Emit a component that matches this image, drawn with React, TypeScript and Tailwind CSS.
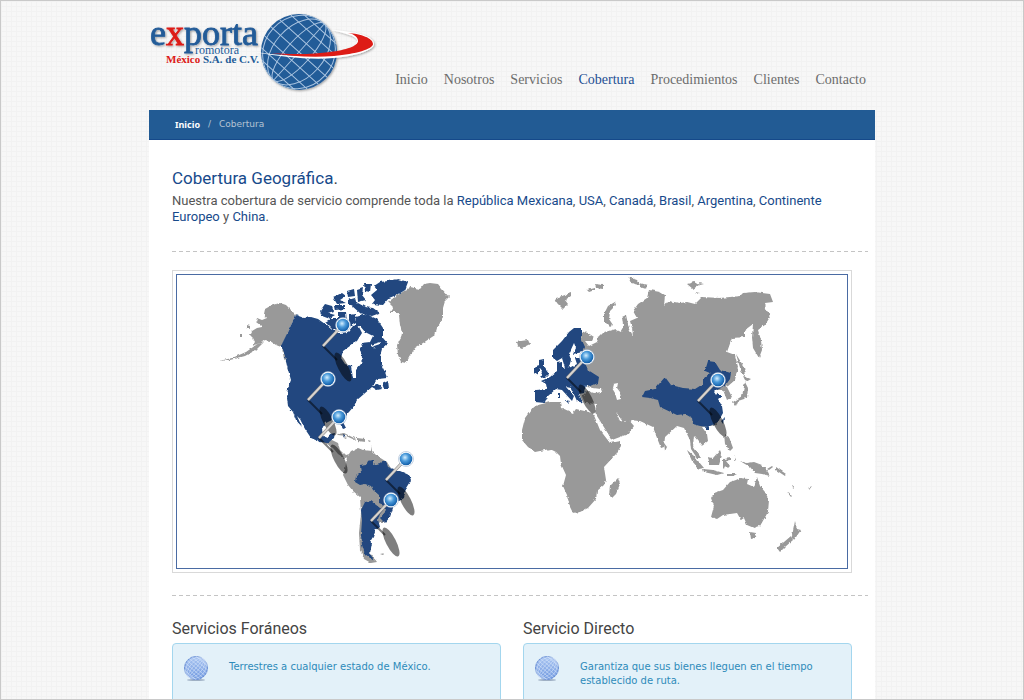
const navItems = [
  "Inicio",
  "Nosotros",
  "Servicios",
  "Cobertura",
  "Procedimientos",
  "Clientes",
  "Contacto",
];

const places = [
  "República Mexicana",
  "USA",
  "Canadá",
  "Brasil",
  "Argentina",
];

const services = [
  {
    title: "Servicios Foráneos",
    text: "Terrestres a cualquier estado de México.",
  },
  {
    title: "Servicio Directo",
    text: "Garantiza que sus bienes lleguen en el tiempo establecido de ruta.",
  },
];

// x, y of the tip of every pin on the map
const pins = [
  [323, 346],
  [308, 400],
  [319, 438],
  [386, 480],
  [371, 521],
  [567, 378],
  [698, 401],
];

const greyLand = [
  // Alaska
  "M296 315L290 309 286 305 280 303 272 305 265 309 264 314 267 318 262 320 257 318 256 322 260 325 262 327 257 328 252 331 250 335 253 338 255 342 252 346 261 343 265 340 270 341 276 345 281 347Z",
  "M264 342L256 350 245 356 230 360 219 361 232 358 246 352 256 345Z",
  "M247 325l3 1 0 3-3-1ZM240 334l2 0 0 2-2 0ZM282 348l5 3 0 12-3-4Z",
  // Greenland
  "M388 302L395 297 404 291 410 287 420 289 424 284 430 283 438 284 442 289 449 297 445 301 443 308 443 318 437 328 435 335 423 343 415 348 410 356 406 363 401 362 398 355 397 345 401 338 402 333 400 325 399 315 397 312 390 312 393 307Z",
  // Central America and the Caribbean
  "M326 442L332 440 338 443 340 450 345 455 350 454 349 457 344 458 338 454 333 448 326 444Z",
  "M337 434l7-1 8 4 4 2-1 1-9-4-8-1ZM357 438l8 1 0 3-8-1ZM344 437l3 1-2 1ZM368 440l3 1-2 1ZM371 446l1 5-1 0Z",
  // South America
  "M347 457L351 451 358 448 363 450 372 451 376 455 382 459 387 462 392 470 392 505 386 510 388 516 386 522 380 522 376 527 371 540 370 553 377 562 371 563 364 559 360 550 359 533 361 513 360 497 353 491 348 485 343 475 345 469Z",
  "M380 554l5-1-2 2ZM413 558l1 0 0 1Z",
  // Iceland and the arctic islands
  "M517 342L521 341 528 340 530 344 522 348 518 346Z",
  "M555 298L562 296 571 293 571 296 565 300 568 304 563 309 557 303Z",
  "M587 290l8-2 0 2-6 2ZM595 284l8 1 0 4-7-1ZM628 277l9 3 3 5-9-2ZM640 283l7 2-1 4-6-2Z",
  "M615 302L608 306 604 314 604 321 610 327 613 325 609 319 610 311 616 305Z",
  "M687 284l7-2 5 3-6 4ZM699 283l5 1-4 1ZM695 292l5 1-4 1Z",
  // Africa and Madagascar
  "M533 407L538 405 550 402 561 402 562 408 573 413 576 409 593 413 600 430 610 443 621 441 621 446 616 454 604 467 606 480 604 485 597 491 596 499 588 508 580 512 573 513 570 507 567 495 563 486 566 475 561 464 560 456 556 452 550 449 535 452 528 447 522 440 522 430 525 418Z",
  "M618 478L620 484 616 494 612 498 609 495 610 486Z",
  // Asia
  "M580 331L588 333 594 337 592 341 585 341 589 346 597 342 598 337 602 333 615 329 621 332 623 325 622 317 626 315 629 328 633 336 632 328 630 321 637 318 633 311 638 304 647 298 649 290 660 292 665 295 664 306 668 301 680 303 687 302 695 304 702 297 720 298 740 296 743 293 755 292 770 294 773 302 765 303 766 308 770 317 765 325 758 330 761 340 762 350 759 358 753 348 752 337 753 324 745 330 745 337 732 338 727 352 735 355 738 367 735 380 727 387 732 397 727 400 723 390 716 390 717 425 702 427 707 434 708 441 702 446 694 436 693 446 701 458 697 458 691 449 690 440 684 428 677 426 665 437 664 447 661 448 657 438 653 427 640 421 628 420 623 422 616 412 620 421 625 422 628 419 634 426 628 434 612 440 597 416 595 412 597 404 585 403 582 396 588 390 586 372 580 360 584 352Z",
  "M664 443l3 4-2 4ZM736 354L744 367 745 377 741 371ZM743 376L751 379 746 382ZM745 382L748 388 747 398 738 401 736 406 733 402 742 396Z",
  // South-east Asia and Oceania
  "M687 450L694 456 704 468 699 469 692 461ZM703 469L713 470 724 473 717 475 704 472Z",
  "M708 457L713 458 720 450 722 455 719 465 710 465ZM723 459l8-1 0 2-5 1 4 5-2 2-3-3-1 4-1-1ZM724 434l5 3 4 11-3 3-5-7ZM727 474l10 0-4 2-6 0ZM734 455l2 5-2 1Z",
  "M740 461L747 463 754 462 762 465 768 472 770 476 762 474 755 473 750 467ZM767 469l5-3 1 1-4 3ZM776 467l10 7-1 2-9-6ZM787 492l5 4-1 1ZM808 488l4-2-3 4ZM792 483l2 5-1 1Z",
  "M711 517L714 506 711 498 714 493 723 490 730 482 736 480 740 478 748 479 747 484 754 487 757 477 760 486 765 492 769 500 768 512 760 526 754 528 747 525 744 518 741 520 737 513 723 515 717 519Z",
  "M750 532l6 1-1 5-4 1ZM795 521L797 529 801 530 794 540 792 536ZM791 536L793 540 785 547 780 552 777 548Z",
];

const blueLand = [
  // Canada, USA and Mexico
  "M296 315L304 318 311 317 318 319 325 324 331 329 340 333 348 332 353 326 358 325 362 333 357 341 350 346 343 351 341 358 345 364 351 366 353 378 356 378 356 370 361 364 362 357 360 350 363 345 368 349 372 350 376 354 381 356 381 364 385 372 387 378 378 379 372 385 378 384 382 389 377 390 372 387 364 394 357 400 354 406 349 412 344 417 343 422 346 428 343 429 339 422 331 420 325 423 322 429 323 436 328 438 330 434 335 433 334 438 328 443 320 442 311 438 305 429 300 419 297 416 302 427 296 420 293 412 288 406 287 398 288 388 291 380 287 366 284 352 281 346Z",
  "M382 383L388 380 389 389 384 389Z",
  // Canadian arctic
  "M408 282L398 279 388 281 380 282 374 286 377 290 371 295 375 300 372 304 383 305 389 298 399 294 405 290Z",
  "M356 317L366 314 377 319 383 328 383 338 388 344 382 349 380 356 373 353 366 348 361 343 370 342 373 336 365 332 360 326 356 327Z",
  "M320 311L325 304 332 306 334 311 328 313 335 315 330 318 338 318 338 312 346 312 347 322 342 329 332 329 325 322 330 319 322 316Z",
  "M352 306L358 303 365 307 373 308 380 313 372 316 360 313ZM349 315l6-1 1 9-7 4ZM333 297L342 293 346 296 340 300 346 303 337 304ZM347 291L354 289 355 296 348 297ZM357 290L363 288 362 295 366 300 358 302ZM348 300L355 298 357 305 348 305ZM364 284L371 284 370 292 365 291ZM334 305l11 0 0 4-10 1Z",
  // Cuba
  "M343 434l3 1-2 2Z",
  // Brazil and Argentina
  "M355 482L356 476 361 473 360 466 366 465 368 461 373 460 373 465 380 463 386 461 388 467 400 471 409 475 411 480 406 488 404 498 396 503 393 508 390 517 385 523 380 518 386 511 384 505 379 503 379 495 373 490 371 486 365 484 360 485Z",
  "M365 502L371 501 380 508 385 508 380 514 378 520 380 527 375 531 373 537 371 540 372 543 370 553 374 561 365 554 362 545 361 535 362 520 361 510Z",
  // Scandinavia
  "M581 328L574 328 569 332 562 341 553 350 553 358 557 361 562 358 565 368 569 367 571 360 569 354 574 343 576 348 573 354 583 352 585 347 581 338Z",
  // British Isles
  "M539 360L544 359 544 367 549 374 546 377 540 378 542 372 539 368ZM534 368L539 366 539 373 534 375Z",
  // Continental Europe
  "M535 390L547 389 546 384 541 381 550 377 557 371 557 363 562 362 562 368 572 367 577 364 575 358 583 358 588 370 599 377 598 383 591 386 586 385 584 393 579 394 583 403 577 401 571 388 566 387 574 396 572 401 562 390 556 389 548 396 545 403 535 402Z",
  "M558 393l2 0 0 5-2 0ZM565 400l5 1-2 2Z",
  // China
  "M642 397L645 391 655 389 659 384 665 377 671 385 683 388 695 389 703 384 703 379 710 373 705 371 708 361 715 362 720 370 731 373 730 379 725 386 715 391 722 396 718 399 722 406 723 413 718 422 708 427 700 426 693 424 692 418 685 414 677 415 660 407 658 400 650 398Z",
  "M724 418l-1 6-2-3ZM706 427l3 0 0 3-3 0Z",
];

// Black Sea, Caspian Sea and the smaller inlets
const water = [
  "M588 391L587 387 593 388 601 389 602 392 594 393Z",
  "M613 384L618 383 617 388 620 392 621 399 617 400 615 393 612 388Z",
  "M381 342l-7 2 0 2 6-2ZM376 349l-5-5 0 2ZM715 389l4 2-3 4-2-3Z",
];

function Logo() {
  return (
    <svg
      className="h-[100px] w-[232px] shrink-0"
      viewBox="148 1 232 100"
      role="img"
      aria-label="Exporta Promotora México"
    >
      <defs>
        <clipPath id="logo-globe">
          <circle cx="299" cy="52" r="38" />
        </clipPath>
        <filter id="logo-shadow" x="-10%" y="-10%" width="125%" height="125%">
          <feDropShadow dx="1" dy="1" stdDeviation="1" floodOpacity="0.35" />
        </filter>
      </defs>
      <g filter="url(#logo-shadow)">
        <circle cx="299" cy="52" r="38" fill="#225b98" />
        <g
          clipPath="url(#logo-globe)"
          fill="none"
          stroke="#a9c4e0"
          strokeWidth="1"
        >
          <g transform="rotate(42 299 52)">
            <ellipse cx="299" cy="52" rx="12" ry="38" />
            <ellipse cx="299" cy="52" rx="25" ry="38" />
            <ellipse cx="299" cy="52" rx="35" ry="38" />
            <path d="M299 14V90M261 52H337M263 41H335M263 63H335M268 30H330M268 74H330M276 21H322M276 83H322" />
          </g>
        </g>
        <path
          d="M255 52C280 56 306 57 328 54C346 52 358 46 357 40C356 36 344 33 332 30C338 30 344 31 350 32C364 34 374 38 374 44C374 50 357 56 334 58C312 60 280 57 255 52Z"
          fill="#fff"
        />
        <path
          d="M271 53C296 55 315 54 330 52C346 50 358 46 358 41C358 37 354 34 348 33C361 34 373 38 373 44C373 49 356 54 334 56C312 58 290 56 271 53Z"
          fill="#dd1b17"
        />
      </g>
      <g
        fontFamily="'Liberation Serif', serif"
        fill="#225b98"
        filter="url(#logo-shadow)"
      >
        <text x="150" y="45" fontSize="36" stroke="#225b98" strokeWidth="0.8">
          e
          <tspan fill="#dd1b17" stroke="#dd1b17">
            x
          </tspan>
          porta
        </text>
      </g>
      <g fontFamily="'Liberation Serif', serif" fill="#225b98">
        <text x="195" y="54" fontSize="12">
          romotora
        </text>
        <text x="166" y="63" fontSize="11" fontWeight="700">
          <tspan fill="#dd1b17">México</tspan> S.A. de C.V.
        </text>
      </g>
    </svg>
  );
}

function Pin({ x, y }: { x: number; y: number }) {
  return (
    <g transform={`translate(${x} ${y})`}>
      <path d="M0 0L14 14" stroke="#000" strokeOpacity="0.5" strokeWidth="2" />
      <ellipse
        rx="5"
        ry="16"
        transform="translate(20 21) rotate(-27)"
        fillOpacity="0.5"
      />
      <path d="M0 0L15 -16" stroke="#777" strokeWidth="3" />
      <path d="M0 0L15 -16" stroke="#d8d4d0" strokeWidth="2" />
      <circle cx="20" cy="-21" r="7.5" fill="#fff" />
      <circle cx="20" cy="-21" r="7.5" fill="none" stroke="#8aa5c4" strokeWidth="0.5" />
      <circle cx="20" cy="-21" r="6.3" fill="url(#pin-ball)" />
    </g>
  );
}

function WorldMap() {
  return (
    <svg
      className="block w-full"
      viewBox="177 275 670 293"
      role="img"
      aria-label="Mapa de cobertura"
    >
      <defs>
        <radialGradient id="pin-ball" cx="0.42" cy="0.38" r="0.65">
          <stop offset="0" stopColor="#d5efff" />
          <stop offset="0.45" stopColor="#4a9ada" />
          <stop offset="1" stopColor="#0b58a5" />
        </radialGradient>
        {/* breaks the straight edges up into a coastline */}
        <filter id="coast" x="0" y="0" width="100%" height="100%">
          <feTurbulence
            type="fractalNoise"
            baseFrequency="0.25"
            numOctaves="2"
            seed="4"
          />
          <feDisplacementMap
            in="SourceGraphic"
            scale="3"
            xChannelSelector="R"
            yChannelSelector="G"
          />
        </filter>
      </defs>
      <g filter="url(#coast)">
        <path d={greyLand.join("")} fill="#999" />
        <path d={blueLand.join("")} fill="#20477f" />
        <path d={water.join("")} fill="#fff" />
      </g>
      {pins.map(([x, y]) => (
        <Pin key={`${x}-${y}`} x={x} y={y} />
      ))}
    </svg>
  );
}

function GlobeIcon() {
  return (
    <svg className="size-[26px] shrink-0" viewBox="0 0 26 26" aria-hidden="true">
      <defs>
        <linearGradient id="globe-fill" x1="0" y1="0" x2="0" y2="1">
          <stop offset="0" stopColor="#a9c5f1" />
          <stop offset="1" stopColor="#7099e0" />
        </linearGradient>
        <clipPath id="globe-clip">
          <circle cx="13" cy="12" r="12" />
        </clipPath>
      </defs>
      <ellipse cx="13" cy="24" rx="9" ry="1" fill="#9fb0c4" />
      <circle cx="13" cy="12" r="11.5" fill="url(#globe-fill)" stroke="#6d92d6" />
      <g
        clipPath="url(#globe-clip)"
        fill="none"
        stroke="#dbe8fb"
        strokeWidth="0.5"
        transform="rotate(40 13 12)"
      >
        <ellipse cx="13" cy="12" rx="3" ry="12" />
        <ellipse cx="13" cy="12" rx="6" ry="12" />
        <ellipse cx="13" cy="12" rx="9" ry="12" />
        <path d="M13 0V24M1 12H25M1 9H25M1 15H25M2 6H24M2 18H24M4 3H22M4 21H22" />
      </g>
    </svg>
  );
}

function Divider() {
  return (
    <div className="mr-[7px] ml-[23px] h-px bg-[repeating-linear-gradient(90deg,#c4c4c4_0_4px,transparent_4px_7px)]" />
  );
}

export default function App() {
  return (
    <div className="h-screen overflow-hidden border border-[#c9c9c9] bg-[#f7f7f7] bg-[linear-gradient(#f2f2f2_1px,transparent_1px),linear-gradient(90deg,#f2f2f2_1px,transparent_1px)] bg-[size:5px_5px] font-['Roboto',sans-serif]">
      <div className="mx-auto max-w-[726px]">
        <header className="-ml-px flex h-[109px] items-start justify-between pr-[9px]">
          <Logo />
          <nav className="flex gap-4 pt-[69px] font-['Liberation_Serif',serif] text-[14px] leading-5 text-[#6c6c6c]">
            {navItems.map((item) => (
              <a
                key={item}
                href="#"
                className={item === "Cobertura" ? "text-[#1d4f93]" : undefined}
              >
                {item}
              </a>
            ))}
          </nav>
        </header>

        <div className="flex h-[30px] items-center gap-2 border-b border-[#15498a] bg-[#225b94] px-[26px] font-['DejaVu_Sans',sans-serif] text-[9px]">
          <a
            href="#"
            className="font-['Noto_Sans',sans-serif] font-bold text-white"
          >
            Inicio
          </a>
          <span className="text-[#b5c3d3]">/</span>
          <span className="text-[#b5c3d3]">Cobertura</span>
        </div>

        <main className="bg-white pb-10">
          <div className="h-[111px] px-[23px] pt-[26px]">
            <h1 className="text-[17px] leading-6 text-[#174a8b]">
              Cobertura Geográfica<span className="text-[#444]">.</span>
            </h1>
            <p className="pt-[3px] text-[13px] leading-4 text-[#555]">
              Nuestra cobertura de servicio comprende toda la{" "}
              {places.map((place) => (
                <span key={place}>
                  <span className="text-[#174a8b]">{place}</span>,{" "}
                </span>
              ))}
              <span className="text-[#174a8b]">Continente Europeo</span> y{" "}
              <span className="text-[#174a8b]">China</span>.
            </p>
          </div>
          <Divider />
          <div className="px-[23px] pt-[18px] pb-[22px]">
            <div className="border border-[#d9d9d9] p-[3px]">
              <div className="border border-[#4a6ba3]">
                <WorldMap />
              </div>
            </div>
          </div>
          <Divider />
          <div className="grid grid-cols-2 gap-[22px] px-[23px] pt-[21px]">
            {services.map((service) => (
              <section key={service.title}>
                <h2 className="pb-0.5 text-[16px] leading-6 text-[#444]">
                  {service.title}
                </h2>
                <div className="flex min-h-[90px] gap-5 rounded border border-[#a3d6ee] bg-[#e3f1f9] px-2.5 pt-3 font-['DejaVu_Sans',sans-serif] text-[10px] leading-[14px] text-[#2e8bba]">
                  <GlobeIcon />
                  <p className="max-w-[240px] pt-1">{service.text}</p>
                </div>
              </section>
            ))}
          </div>
        </main>
      </div>
    </div>
  );
}
